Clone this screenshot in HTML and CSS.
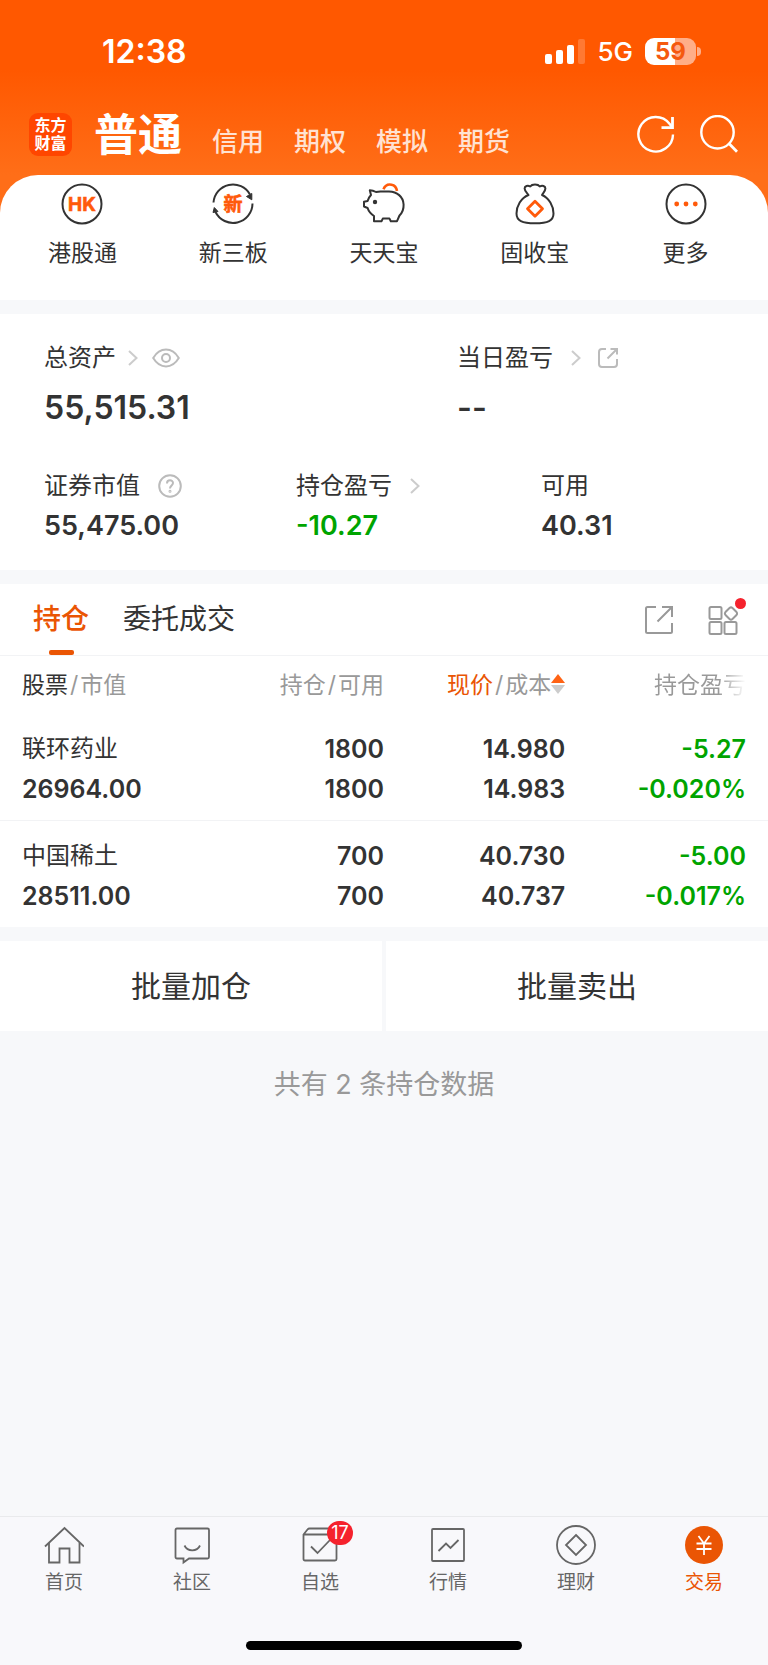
FILE: index.html
```html
<!DOCTYPE html>
<html lang="zh-CN">
<head>
  <meta charset="UTF-8">
  <meta name="viewport" content="width=device-width, initial-scale=1.0">
  <title>交易 | 东方财富</title>
  <link rel="stylesheet" href="styles.css">
</head>
<body>
  <header>
    <div class="status-bar">
      <span class="time">12:38</span>
      <div class="status-right">
        <svg class="signal" width="40" height="26" viewBox="0 0 40 26" fill="#fff">
          <rect x="0" y="15" width="7" height="10" rx="2"/>
          <rect x="11" y="11" width="7" height="14" rx="2"/>
          <rect x="22" y="6" width="7" height="19" rx="2"/>
          <rect x="33" y="0" width="7" height="25" rx="2" opacity="0.2"/>
        </svg>
        <span class="network">5G</span>
        <span class="battery">59</span>
      </div>
    </div>
    <div class="top-nav">
      <a href="#" class="logo">东方<br>财富</a>
      <nav class="accounts">
        <a href="#" class="current">普通</a>
        <a href="#">信用</a>
        <a href="#">期权</a>
        <a href="#">模拟</a>
        <a href="#">期货</a>
      </nav>
      <button type="button" class="icon-btn" aria-label="刷新">
        <svg width="38" height="38" viewBox="0 0 38 38" fill="none" stroke="#fff" stroke-width="2.4">
          <path d="M36 19.5A17.3 17.3 0 1 1 32.5 8.8L35.3 12.5"/>
          <path d="M35.5 2V12.7H24.5" stroke-width="2.8"/>
        </svg>
      </button>
      <button type="button" class="icon-btn" aria-label="搜索">
        <svg width="38" height="38" viewBox="0 0 38 38" fill="none" stroke="#fff" stroke-width="2.4">
          <circle cx="17.5" cy="17.3" r="16.2"/>
          <path d="M28.5 28L37 36.8" stroke-width="2.8"/>
        </svg>
      </button>
    </div>
  </header>

  <main>
    <nav class="quick">
      <a href="#">
        <svg width="42" height="42" viewBox="0 0 42 42">
          <circle cx="21" cy="21" r="19.5" fill="none" stroke="#333" stroke-width="2"/>
          <text x="21" y="27.5" class="icon-text">HK</text>
        </svg>
        港股通
      </a>
      <a href="#">
        <svg width="42" height="42" viewBox="0 0 42 42">
          <g fill="none" stroke="#333" stroke-width="2">
            <path d="M1.5 19.5A19.5 19.5 0 0 1 38 11.5"/>
            <path d="M40.5 20.5A19.5 19.5 0 0 1 3.5 29"/>
          </g>
          <path d="M34.5 13.5L39.8 10.5V16.8Z" fill="#333" stroke="#333"/>
          <path d="M1 29.5L2.3 24.5L6 28.5Z" fill="#333" stroke="#333"/>
          <text x="21" y="28" class="icon-text">新</text>
        </svg>
        新三板
      </a>
      <a href="#">
        <svg width="42" height="42" viewBox="0 0 42 42" fill="none" stroke="#333" stroke-width="2" stroke-linejoin="round">
          <path d="M13 9C11 7.8 8.8 7.2 6.8 7.2L8 12C6.2 13.8 5.2 15.8 4.6 18L1 18.8V23.5L4.6 25C5.5 28 7.5 30.6 11 33V38.2H18.5L19.8 35.6H26.5L27.8 38.2H34L36.5 32.5C39.5 29.5 40.8 26 40.6 21.5C40.2 13.5 34 8.8 26 8.6L17.5 8.4Z"/>
          <circle cx="12" cy="19" r="2.2" fill="#333" stroke="none"/>
          <path d="M20.5 6.2C22 2.5 25 1 28.5 1.7C31.8 2.3 33.5 4.5 34 8" stroke="#ff5a0a" stroke-width="2.6"/>
        </svg>
        天天宝
      </a>
      <a href="#">
        <svg width="42" height="42" viewBox="0 0 42 42" fill="none" stroke="#333" stroke-width="2" stroke-linejoin="round">
          <path d="M14.5 12C12.500 9.500 10.600 8 10.600 5.600C10.600 3 13.800 2 16.200 3.500C18 .8 24 .8 25.800 3.500C28.200 2 31.400 3 31.400 5.600C31.400 8 29.500 9.500 28 12C35 15 39.500 23 39.500 30.500C39.500 37.500 34 40.300 21 40.300C8 40.300 2.500 37.500 2.500 30.500C2.500 23 7 15 14.500 12Z"/>
          <path d="M21 18.200L28.500 25.700L21 33.200L13.500 25.700Z" stroke="#ff5a0a" stroke-width="2.8"/>
        </svg>
        固收宝
      </a>
      <a href="#">
        <svg width="42" height="42" viewBox="0 0 42 42">
          <circle cx="21" cy="21" r="19.5" fill="none" stroke="#333" stroke-width="2"/>
          <g fill="#ff5a0a">
            <circle cx="11.7" cy="21" r="2.4"/>
            <circle cx="21" cy="21" r="2.4"/>
            <circle cx="30.3" cy="21" r="2.4"/>
          </g>
        </svg>
        更多
      </a>
    </nav>

    <section class="assets">
      <div class="assets-total">
        <div>
          <div class="label">
            总资产
            <svg class="arrow" width="10" height="16" viewBox="0 0 10 16"><path d="M1 1L8.5 8L1 15"/></svg>
            <svg class="eye" width="28" height="20" viewBox="0 0 28 20">
              <path d="M1.2 10C4.5 4.5 9 1.6 14 1.6S23.5 4.5 26.8 10C23.5 15.5 19 18.4 14 18.4S4.5 15.5 1.2 10Z"/>
              <circle cx="14" cy="10" r="4"/>
            </svg>
          </div>
          <div class="value big">55,515.31</div>
        </div>
        <div>
          <div class="label">
            当日盈亏
            <svg class="arrow wide" width="10" height="16" viewBox="0 0 10 16"><path d="M1 1L8.5 8L1 15"/></svg>
            <svg class="share" width="22" height="22" viewBox="0 0 22 22">
              <path d="M9 2H5Q2 2 2 5V17Q2 20 5 20H17Q20 20 20 17V12"/>
              <path d="M13.5 2H20V7.5M20 2L10.5 11.5"/>
            </svg>
          </div>
          <div class="value big">--</div>
        </div>
      </div>
      <div class="assets-detail">
        <div>
          <div class="label">
            证券市值
            <svg class="help" width="24" height="24" viewBox="0 0 24 24">
              <circle cx="12" cy="12" r="10.8"/>
              <path d="M9 9.5C9 5.2 15 5.5 15 9C15 11.5 12 11.5 12 14.5"/>
              <circle cx="12" cy="17.3" r=".5"/>
            </svg>
          </div>
          <div class="value">55,475.00</div>
        </div>
        <div>
          <div class="label">
            持仓盈亏
            <svg class="arrow wide" width="10" height="16" viewBox="0 0 10 16"><path d="M1 1L8.5 8L1 15"/></svg>
          </div>
          <div class="value down">-10.27</div>
        </div>
        <div>
          <div class="label">可用</div>
          <div class="value">40.31</div>
        </div>
      </div>
    </section>

    <section class="positions">
      <div class="tabs">
        <button type="button" class="tab active">持仓</button>
        <button type="button" class="tab">委托成交</button>
        <div class="tools">
          <button type="button" class="icon-btn" aria-label="分享">
            <svg width="30" height="30" viewBox="0 0 30 30" fill="none" stroke="#999" stroke-width="2">
              <path d="M12 2H3.5Q2 2 2 3.5V26.5Q2 28 3.5 28H26.5Q28 28 28 26.5V18"/>
              <path d="M18 2H28V12M28 2L13.5 16.5"/>
            </svg>
          </button>
          <button type="button" class="icon-btn more" aria-label="功能">
            <svg width="30" height="30" viewBox="0 0 30 30" fill="none" stroke="#999" stroke-width="2">
              <rect x="1.5" y="2" width="12" height="12" rx="1.5"/>
              <rect x="1.5" y="17" width="12" height="12" rx="1.5"/>
              <rect x="16.5" y="17" width="12" height="12" rx="1.5"/>
              <path d="M21.5 3Q23 1.8 24.5 3L28.5 7Q29.7 8.5 28.5 10L24.5 14Q23 15.2 21.5 14L17.5 10Q16.3 8.5 17.5 7Z"/>
            </svg>
          </button>
        </div>
      </div>

      <table>
        <thead>
          <tr>
            <th class="col-stock"><span class="dark">股票</span><span class="slash">/</span>市值</th>
            <th class="col-amount">持仓<span class="slash">/</span>可用</th>
            <th class="col-price"><span class="orange">现价</span><span class="slash">/</span>成本<svg class="sort" width="14" height="20" viewBox="0 0 14 20"><path d="M7 0L14 9H0Z" fill="#ff6314"/><path d="M0 11H14L7 20Z" fill="#ccc"/></svg></th>
            <th class="col-profit"><span class="fade">持仓盈亏</span></th>
          </tr>
        </thead>
        <tbody>
          <tr>
            <td><span class="name">联环药业</span><br>26964.00</td>
            <td>1800<br>1800</td>
            <td>14.980<br>14.983</td>
            <td class="down">-5.27<br>-0.020%</td>
          </tr>
          <tr>
            <td><span class="name">中国稀土</span><br>28511.00</td>
            <td>700<br>700</td>
            <td>40.730<br>40.737</td>
            <td class="down">-5.00<br>-0.017%</td>
          </tr>
        </tbody>
      </table>
    </section>

    <div class="batch">
      <button type="button">批量加仓</button>
      <button type="button">批量卖出</button>
    </div>

    <p class="summary">共有 2 条持仓数据</p>
  </main>

  <footer>
    <nav class="tab-bar">
      <a href="#">
        <svg width="40" height="40" viewBox="0 0 40 40">
          <path d="M1 21.5L20.5 3L40 21.5"/>
          <path d="M5 18V37.5H15.5V23.5H25.5V37.5H35.5V18"/>
        </svg>
        首页
      </a>
      <a href="#">
        <svg width="40" height="40" viewBox="0 0 40 40">
          <path d="M5 3.5H35.5Q37 3.5 37 5V32Q37 33.5 35.5 33.5H17L11.5 37.5V33.5H5Q3.5 33.5 3.5 32V5Q3.5 3.5 5 3.5Z"/>
          <path d="M12.5 20.5C15.5 27 25 27 28 20.5"/>
        </svg>
        社区
      </a>
      <a href="#">
        <span class="badge">17</span>
        <svg width="40" height="40" viewBox="0 0 40 40">
          <path d="M3.5 9.5L7.5 4.5Q8.3 3.5 9.5 3.5H31L36.5 9.5V34Q36.5 35.5 35 35.5H5Q3.5 35.5 3.5 34ZM3.5 9.5H36.5"/>
          <path d="M11 21.5L17.5 28L30 15"/>
        </svg>
        自选
      </a>
      <a href="#">
        <svg width="40" height="40" viewBox="0 0 40 40">
          <rect x="4" y="4" width="32" height="32" rx="1"/>
          <path d="M10.5 26L18 18.5L22.5 23L30.5 15"/>
        </svg>
        行情
      </a>
      <a href="#">
        <svg width="40" height="40" viewBox="0 0 40 40">
          <circle cx="20" cy="20" r="19"/>
          <path d="M20 10L30 20L20 30L10 20Z"/>
        </svg>
        理财
      </a>
      <a href="#" class="active">
        <svg width="40" height="40" viewBox="0 0 40 40">
          <circle cx="20" cy="20" r="19" fill="#ea5504" stroke="none"/>
          <path d="M14.5 11L20 18.5L25.5 11M20 18.5V30M12.5 18.5H27.5M12.5 24H27.5" stroke="#fff"/>
        </svg>
        交易
      </a>
    </nav>
    <div class="home-indicator"></div>
  </footer>
</body>
</html>
```

FILE: styles.css
```css
* {
  box-sizing: border-box;
}
body {
  font-family: Inter, 'Noto Sans CJK SC', sans-serif;
  line-height: 1.4;
  margin: 0;
  min-height: 100vh;
  display: flex;
  flex-direction: column;
  background: #f7f8fa;
  color: #333;
}
a {
  color: inherit;
  text-decoration: none;
}
button {
  padding: 0;
  border: none;
  background: none;
  color: inherit;
  font-family: inherit;
  line-height: inherit;
  cursor: pointer;
}
svg {
  display: block;
}

/* header */
header {
  padding-bottom: 51px;
  margin-bottom: -40px;
  background: linear-gradient(#ff5800 70px, #ff6e18 175px);
  color: #fff;
}
.status-bar {
  display: flex;
  justify-content: space-between;
  align-items: center;
  height: 104px;
  padding: 0 72px 0 102px;
}
.time {
  font-size: 32px;
  font-weight: 600;
}
.status-right {
  display: flex;
  align-items: center;
  gap: 12px;
}
.network {
  font-size: 26px;
  font-weight: 500;
}
.battery {
  position: relative;
  width: 51px;
  height: 27px;
  border-radius: 9px;
  background: linear-gradient(to right, #fff 59%, #ffae88 59%);
  color: #f5590f;
  font-size: 24px;
  font-weight: 700;
  line-height: 27px;
  text-align: center;
}
.battery::after {
  content: "";
  position: absolute;
  right: -5px;
  top: 9px;
  width: 4px;
  height: 9px;
  border-radius: 0 4px 4px 0;
  background: #ffae88;
}
.top-nav {
  display: flex;
  align-items: center;
  gap: 22px;
  height: 60px;
  padding: 0 30px 0 29px;
}
.top-nav .icon-btn + .icon-btn {
  margin-left: 3px;
}
.logo {
  width: 43px;
  height: 43px;
  padding-top: 3px;
  border-radius: 9px;
  background: #ff4600;
  font-size: 16px;
  font-weight: 700;
  line-height: 18px;
  text-align: center;
}
.accounts {
  flex: 1;
  display: flex;
  align-items: baseline;
  gap: 30px;
  padding-top: 8px;
  color: #ffe2d2;
  font-size: 26px;
  font-weight: 500;
  line-height: 60px;
}
.accounts .current {
  color: #fff;
  font-size: 44px;
  font-weight: 700;
}

/* quick entries */
.quick {
  display: grid;
  grid-template-columns: repeat(5, 1fr);
  padding: 8px 7px 31px;
  border-radius: 38px 38px 0 0;
  background: #fff;
  font-size: 23px;
  line-height: 32px;
}
.quick a {
  display: flex;
  flex-direction: column;
  align-items: center;
  gap: 12px;
}
.icon-text {
  fill: #ff5a0a;
  stroke: #ff5a0a;
  stroke-width: 0.6;
  font-size: 19px;
  font-weight: 700;
  text-anchor: middle;
}

/* assets */
.assets {
  margin-top: 14px;
  padding: 26px 44px 24px;
  background: #fff;
}
.assets-total {
  display: grid;
  grid-template-columns: 413fr 267fr;
  margin-bottom: 40px;
}
.assets-detail {
  display: grid;
  grid-template-columns: 252fr 245fr 183fr;
}
.label {
  display: flex;
  align-items: center;
  font-size: 24px;
  line-height: 36px;
}
.label svg {
  fill: none;
  stroke: #bbb;
  stroke-width: 2;
}
.label .arrow {
  margin-left: 12px;
  stroke: #ccc;
}
.label .wide {
  margin-left: 18px;
}
.eye {
  margin-left: 14px;
}
.share {
  margin-left: 16px;
}
.help {
  margin-left: 18px;
}
.value {
  margin-top: 2px;
  font-size: 27px;
  font-weight: 600;
  line-height: 40px;
}
.value.big {
  margin-top: 12px;
  font-size: 32px;
}
.down {
  color: #00a400;
}

/* positions */
.positions {
  margin-top: 14px;
  background: #fff;
}
.tabs {
  display: flex;
  gap: 34px;
  height: 72px;
  padding: 0 30px 0 33px;
  border-bottom: 1px solid #f2f3f5;
}
.tab {
  position: relative;
  font-size: 28px;
}
.tab.active {
  color: #ea5504;
  font-weight: 500;
}
.tab.active::after {
  content: "";
  position: absolute;
  left: 50%;
  bottom: 0;
  width: 25px;
  height: 5px;
  margin-left: -12px;
  border-radius: 2px;
  background: #ea5504;
}
.tools {
  display: flex;
  align-items: center;
  gap: 34px;
  margin-left: auto;
}
.more {
  position: relative;
}
.more::after {
  content: "";
  position: absolute;
  right: -8px;
  top: -7px;
  width: 11px;
  height: 11px;
  border-radius: 50%;
  background: #f5222d;
}
table {
  width: 100%;
  border-collapse: collapse;
  table-layout: fixed;
}
th {
  height: 58px;
  padding: 0;
  color: #999;
  font-size: 23px;
  font-weight: 400;
  text-align: right;
  white-space: nowrap;
}
td {
  padding: 14px 0 11px;
  font-size: 25px;
  font-weight: 600;
  line-height: 40px;
  text-align: right;
}
tbody tr + tr {
  border-top: 1px solid #f2f3f5;
}
th:first-child,
td:first-child {
  padding-left: 22px;
  text-align: left;
}
th:last-child,
td:last-child {
  padding-right: 22px;
}
.col-stock {
  width: 26%;
}
.col-amount {
  width: 24%;
}
.col-price {
  width: 23.6%;
}
.name {
  font-size: 24px;
  font-weight: 400;
}
.dark {
  color: #333;
}
.orange {
  color: #ea5504;
}
.slash {
  margin: 0 2px;
}
.sort {
  display: inline-block;
  vertical-align: -1px;
}
.fade {
  background: linear-gradient(to right, #999 70%, #fff);
  -webkit-background-clip: text;
  background-clip: text;
  color: transparent;
}

/* batch buttons */
.batch {
  display: grid;
  grid-template-columns: 1fr 1fr;
  gap: 4px;
  margin-top: 14px;
}
.batch button {
  height: 90px;
  background: #fff;
  font-size: 30px;
}
.summary {
  margin: 32px 0;
  color: #999;
  font-size: 27px;
  line-height: 44px;
  text-align: center;
}

/* bottom bar */
footer {
  margin-top: auto;
  padding-bottom: 15px;
  border-top: 1px solid #e9eaec;
  background: #f8f8fb;
}
.tab-bar {
  display: grid;
  grid-template-columns: repeat(6, 1fr);
  padding-top: 8px;
  color: #666;
  font-size: 19px;
  line-height: 24px;
}
.tab-bar a {
  position: relative;
  display: flex;
  flex-direction: column;
  align-items: center;
  gap: 6px;
}
.tab-bar svg {
  fill: none;
  stroke: #666;
  stroke-width: 1.8;
}
.tab-bar .active {
  color: #ea5504;
}
.badge {
  position: absolute;
  left: 50%;
  top: -4px;
  width: 26px;
  height: 24px;
  margin-left: 7px;
  border-radius: 12px;
  background: #f5222d;
  color: #fff;
  font-size: 18px;
  text-align: center;
}
.home-indicator {
  width: 36%;
  height: 9px;
  margin: 46px auto 0;
  border-radius: 5px;
  background: #000;
}
```
